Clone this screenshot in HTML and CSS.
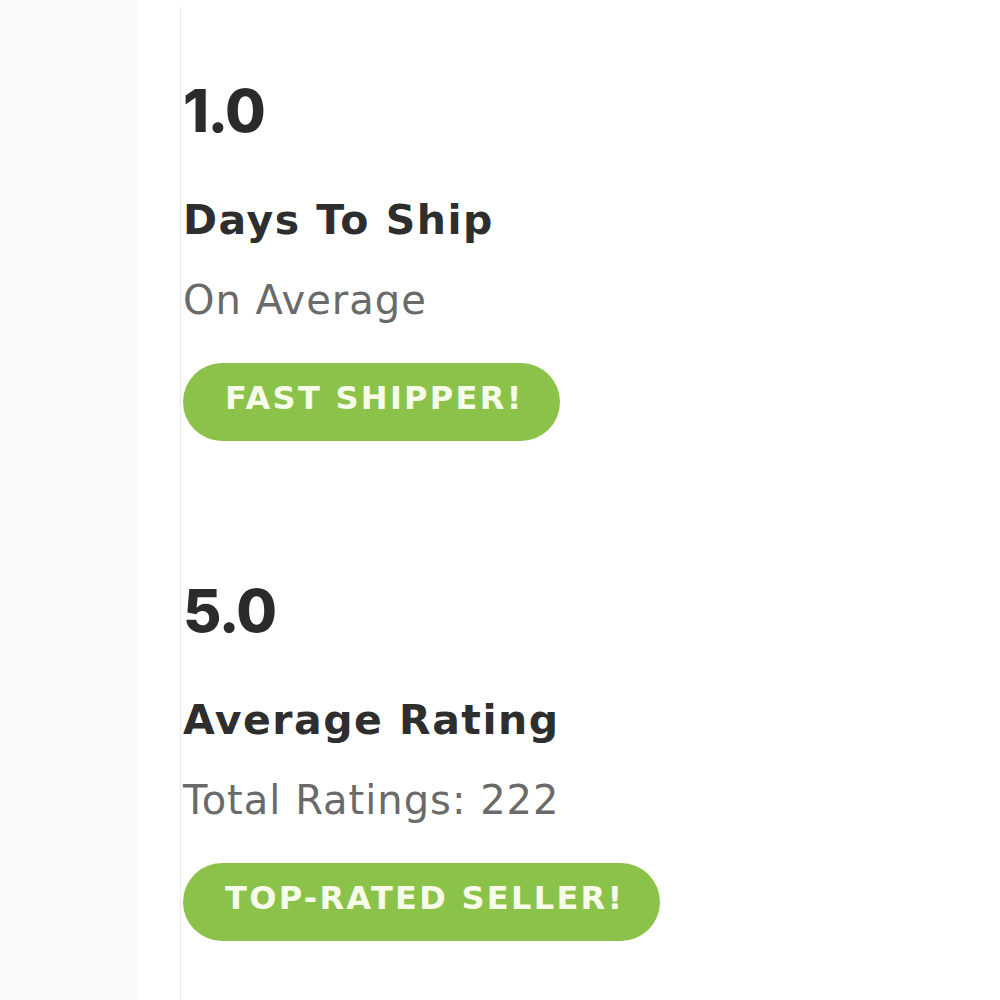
FILE: index.html
```html
<!DOCTYPE html>
<html lang="en">
<head>
<meta charset="utf-8">
<title>Seller stats</title>
<link rel="stylesheet" href="styles.css">
</head>
<body>
<div class="page">
  <aside class="sidebar"></aside>
  <main class="stats">
    <section class="stat">
      <div class="stat-value">1.0</div>
      <div class="stat-label">Days To Ship</div>
      <div class="stat-sub">On Average</div>
      <div class="badge">FAST SHIPPER!</div>
    </section>
    <section class="stat">
      <div class="stat-value">5.0</div>
      <div class="stat-label">Average Rating</div>
      <div class="stat-sub">Total Ratings: 222</div>
      <div class="badge">TOP-RATED SELLER!</div>
    </section>
  </main>
</div>
</body>
</html>
```
FILE: styles.css
```css
html, body {
  margin: 0;
  padding: 0;
  background: #ffffff;
}
body {
  font-family: "DejaVu Sans", "Inter", sans-serif;
  color: #2b2b2b;
}
.page {
  display: flex;
  min-height: 1000px;
}
.sidebar {
  width: 137px;
  flex: 0 0 137px;
  background: #fcf9f9;
}
.stats {
  margin-left: 43px;
  margin-top: 7px;
  border-left: 1.5px solid #ebebeb;
  padding-left: 2px;
  padding-top: 74px;
  display: flex;
  flex-direction: column;
  gap: 140px;
  min-height: 919px;
}
.stat {
  display: flex;
  flex-direction: column;
  align-items: flex-start;
}
.stat-value {
  font-family: "Inter", sans-serif;
  font-size: 59px;
  line-height: 60px;
  font-weight: 800;
  letter-spacing: -1.5px;
}
.stat-label {
  margin-top: 54px;
  font-size: 41px;
  line-height: 50px;
  font-weight: 700;
  letter-spacing: 1.5px;
  color: #2e2e2e;
}
.stat-sub {
  margin-top: 31px;
  font-size: 40px;
  line-height: 48px;
  font-weight: 400;
  letter-spacing: 1px;
  color: #6a6a6a;
}
.badge {
  margin-top: 39px;
  height: 78px;
  box-sizing: border-box;
  padding: 0 36px 8px 42px;
  line-height: 70px;
  font-size: 32px;
  font-weight: 700;
  letter-spacing: 2.3px;
  color: #f6fbea;
  background: #8bc34a;
  border-radius: 39px;
}
```
